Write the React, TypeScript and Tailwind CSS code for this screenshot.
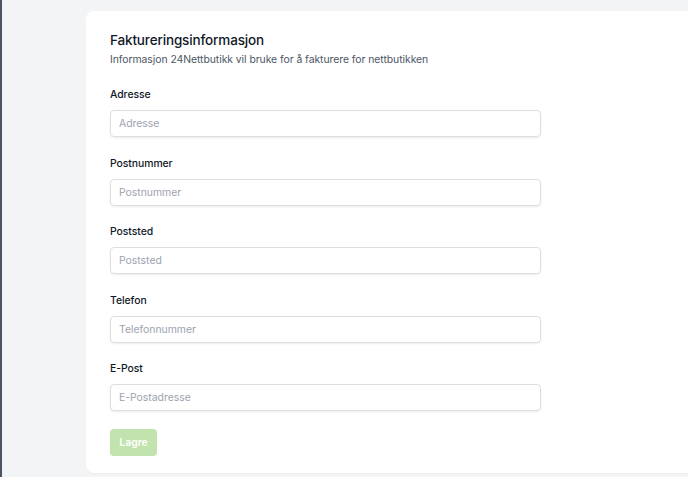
const fields = [
  { label: "Adresse", placeholder: "Adresse" },
  { label: "Postnummer", placeholder: "Postnummer" },
  { label: "Poststed", placeholder: "Poststed" },
  { label: "Telefon", placeholder: "Telefonnummer" },
  { label: "E-Post", placeholder: "E-Postadresse" },
];

export default function App() {
  return (
    <div
      className="flex h-[477px] w-[688px] overflow-hidden bg-[#f3f4f6]"
      style={{ fontFamily: "Inter, 'Noto Sans', sans-serif" }}
    >
      <div className="w-[2px] shrink-0 bg-[#4b5563]" />
      <div className="flex-1 pl-[84px] pt-[11px] pb-[4px]">
        <div className="h-full w-[640px] rounded-l-[8px] bg-white px-6 pt-[20px] shadow-[0_1px_2px_rgba(0,0,0,0.03)]">
          <h2 className="text-[13.5px] leading-[18px] font-medium tracking-[-0.15px] text-[#111827]">
            Faktureringsinformasjon
          </h2>
          <p className="mt-[4px] text-[10.4px] leading-[14px] tracking-[-0.05px] text-[#4b5563]">
            Informasjon 24Nettbutikk vil bruke for å fakturere for nettbutikken
          </p>
          <div className="mt-[21px] flex flex-col gap-[19.5px]">
            {fields.map((f) => (
              <div key={f.label} className="flex flex-col gap-[8px]">
                <label className="text-[10.4px] leading-[14px] font-medium tracking-[-0.05px] text-[#111827]">
                  {f.label}
                </label>
                <input
                  placeholder={f.placeholder}
                  className="h-[27px] w-[431px] rounded-[4px] border border-[#dcdee2] px-[8px] text-[10.4px] text-[#111827] shadow-[0_1px_2px_rgba(0,0,0,0.08)] outline-none placeholder:text-[#9ca3af]"
                />
              </div>
            ))}
          </div>
          <button
            disabled
            className="mt-[18px] h-[27px] w-[47px] rounded-[4px] bg-[#c1e3ae] text-[10.4px] font-semibold text-white"
          >
            Lagre
          </button>
        </div>
      </div>
    </div>
  );
}
